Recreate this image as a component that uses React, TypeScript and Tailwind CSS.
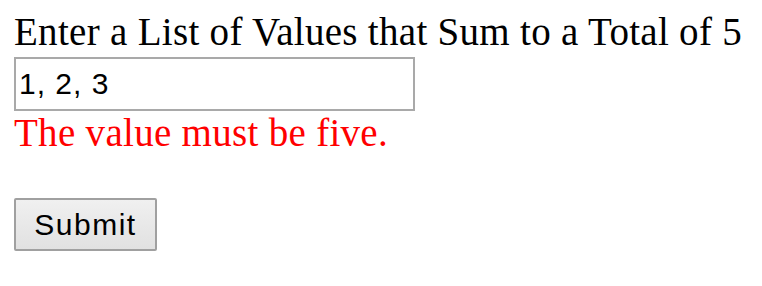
import React from 'react';

export default function App() {
  return (
    <div className="px-[14px] pt-[10px] font-['Liberation_Serif',serif] text-[39px] leading-[44px] tracking-[0.3px] text-black">
      <div>Enter a List of Values that Sum to a Total of 5</div>
      <input
        type="text"
        defaultValue="1, 2, 3"
        className="mt-[3px] block w-[401px] h-[54px] border-2 border-[#a9a9a9] pl-[3px] font-['Liberation_Sans',sans-serif] text-[30px] tracking-[1px] text-black outline-none"
      />
      <div className="text-[#ff0000]">The value must be five.</div>
      <button className="mt-[43px] block w-[143px] h-[53px] border-2 border-[#a0a0a0] rounded-[2px] bg-gradient-to-b from-[#f0f0f0] to-[#e1e1e1] font-['Liberation_Sans',sans-serif] text-[30px] tracking-[1.5px] text-black">
        Submit
      </button>
    </div>
  );
}
